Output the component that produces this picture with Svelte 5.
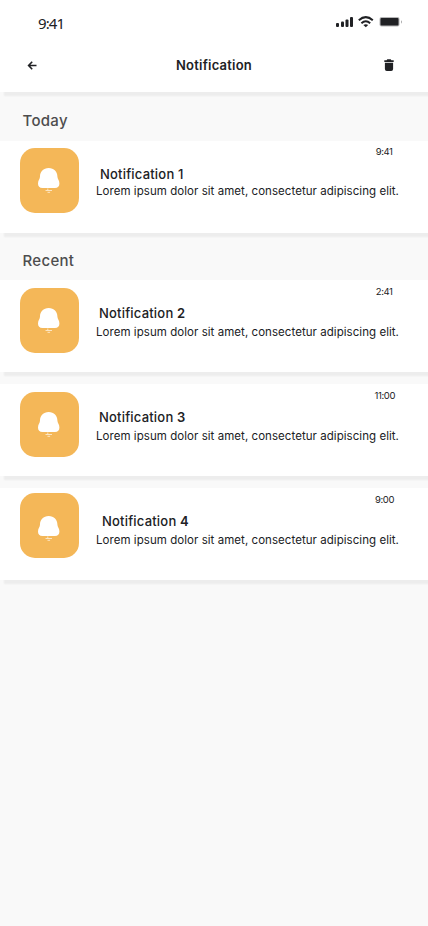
<script>
    /** Notifications grouped by section, nudges are in pixels */
    const sections = [
        {
            label: 'Today',
            items: [
                { id: 1, time: '9:41', iconTop: 7, bellTop: 20, indent: 4, gap: 0, timeRight: 35.5, timeTop: 4 },
            ],
        },
        {
            label: 'Recent',
            items: [
                { id: 2, time: '2:41', iconTop: 8, bellTop: 20, indent: 3, gap: 2, timeRight: 35.5, timeTop: 5 },
                { id: 3, time: '11:00', iconTop: 8, bellTop: 20, indent: 3, gap: 2, timeRight: 33, timeTop: 5 },
                { id: 4, time: '9:00', iconTop: 5, bellTop: 23, indent: 6, gap: 2, timeRight: 34, timeTop: 5 },
            ],
        },
    ];
</script>

<div class="screen">
    <header class="header">
        <div class="status-bar">
            <span class="clock">9:41</span>
            <svg class="status-icons" width="68" height="14" viewBox="0 0 68 14" fill="#202124">
                <!-- Signal -->
                <rect x="0" y="8" width="3" height="4" rx="1" />
                <rect x="5" y="6.5" width="3" height="5.5" rx="1" />
                <rect x="9.5" y="4.5" width="3" height="7.5" rx="1" />
                <rect x="14" y="2" width="3" height="10" rx="1" />
                <!-- Wifi -->
                <g fill="none" stroke="#202124" stroke-width="2">
                    <path d="M22.8 5.2Q29.8-.9 36.8 5.2" />
                    <path d="M25.4 8.2Q29.8 4.4 34.2 8.2" />
                </g>
                <path d="M27.4 10.1Q29.8 8.3 32.2 10.1L29.8 12.3Z" />
                <!-- Battery -->
                <rect x="43.5" y="2" width="20" height="9.5" rx="2" fill="#b5b5b6" />
                <rect x="44.5" y="3" width="18" height="7.5" rx="1" />
                <path d="M65 5.2q2 1.5 0 3.5z" fill="#a8a8a9" />
            </svg>
        </div>
        <div class="nav">
            <svg width="10" height="10" viewBox="0 0 10 10" fill="none" stroke="#202124" stroke-width="1.6"><path d="M9.5 5.5H1.9M5.2 1.8 1.6 5.5l3.6 3.7" /></svg>
            <h1>Notification</h1>
            <svg width="10" height="12" viewBox="0 0 10 12" fill="#202124"><path d="M3.3.3h3.4l.7 1H9.7V3H.3V1.3h2.3zM.9 3.8h8.2v6.2Q9.1 11.9 7.2 11.9H2.8Q.9 11.9.9 10z" /></svg>
        </div>
    </header>

    {#each sections as section}
        <section>
            <h2>{section.label}</h2>
            <div class="list">
                {#each section.items as item}
                    <article class="card">
                        <div class="tile" style="margin-top: {item.iconTop}px; padding-top: {item.bellTop}px">
                            <svg width="22" height="26" viewBox="0 0 22 26" fill="#fff">
                                <path d="M10.7 0C5.4 0 2 3.6 2 8.6C2 11.2 0 12.2 0 15.6Q0 20 4.5 20h12.4q4.5 0 4.5-4.4c0-3.4-2-4.4-2-7C19.4 3.6 16 0 10.7 0Z" />
                                <path d="M7.5 22.5h6.5M9.5 24.3h2.6M9.8 20.5v1.5" fill="none" stroke="#fff" stroke-width="1" opacity=".65" />
                            </svg>
                        </div>
                        <div class="content">
                            <h3 style="margin-left: {item.indent}px">Notification <span class:strong={item.id > 1}>{item.id}</span></h3>
                            <p style="margin-top: {item.gap}px">Lorem ipsum dolor sit amet, consectetur adipiscing elit.</p>
                        </div>
                        <time style="top: {item.timeTop}px; right: {item.timeRight}px">{item.time}</time>
                    </article>
                {/each}
            </div>
        </section>
    {/each}
</div>

<style>
    :global(body) {
        background: #f9f9f9;
    }

    .screen {
        width: 428px;
        min-height: 926px;
        overflow: hidden;
        background: #f9f9f9;
        color: #202124;
        font-family: Inter, "Liberation Sans", sans-serif;
    }

    h1,
    h2,
    h3,
    p {
        margin: 0;
    }

    .header {
        height: 92px;
        background: #fff;
        box-shadow: 4px 4px 1.5px #ededed;
    }

    .status-bar {
        display: flex;
        justify-content: space-between;
        align-items: flex-start;
        padding: 15px 24px 0 38px;
        height: 33px;
    }

    .clock {
        margin-top: -1px;
        font-family: "Noto Sans", sans-serif;
        font-size: 15px;
        line-height: 18px;
        letter-spacing: -0.9px;
    }

    .nav {
        display: flex;
        justify-content: space-between;
        align-items: center;
        height: 34px;
        padding: 0 34px 0 27px;
    }

    h1 {
        margin-left: 7px;
        font-size: 13px;
        font-weight: 600;
        line-height: 18px;
        letter-spacing: 0.22px;
    }

    h2 {
        height: 48px;
        padding-left: 22.5px;
        color: #4d4d4e;
        font-size: 15px;
        font-weight: 500;
        line-height: 56px;
        letter-spacing: 0.3px;
    }

    section:first-of-type {
        padding-top: 1px;
    }

    section + section h2 {
        height: 47px;
    }

    .list {
        display: flex;
        flex-direction: column;
        gap: 12px;
    }

    .card {
        position: relative;
        display: flex;
        gap: 17px;
        height: 92px;
        padding-left: 20px;
        background: #fff;
        box-shadow: 4px 4px 1.5px #ededed;
    }

    .tile {
        box-sizing: border-box;
        width: 59px;
        height: 65px;
        padding-left: 18px;
        border-radius: 15px;
        background: #f4b758;
    }

    .tile svg {
        display: block;
    }

    .content {
        padding-top: 24px;
        white-space: nowrap;
    }

    h3 {
        font-size: 13px;
        font-weight: 500;
        line-height: 18px;
        letter-spacing: 0.2px;
    }

    .strong {
        font-weight: 600;
    }

    p {
        font-size: 11.5px;
        line-height: 16px;
        letter-spacing: 0.05px;
    }

    time {
        position: absolute;
        font-size: 9.5px;
        line-height: 14px;
        letter-spacing: -0.4px;
    }
</style>
